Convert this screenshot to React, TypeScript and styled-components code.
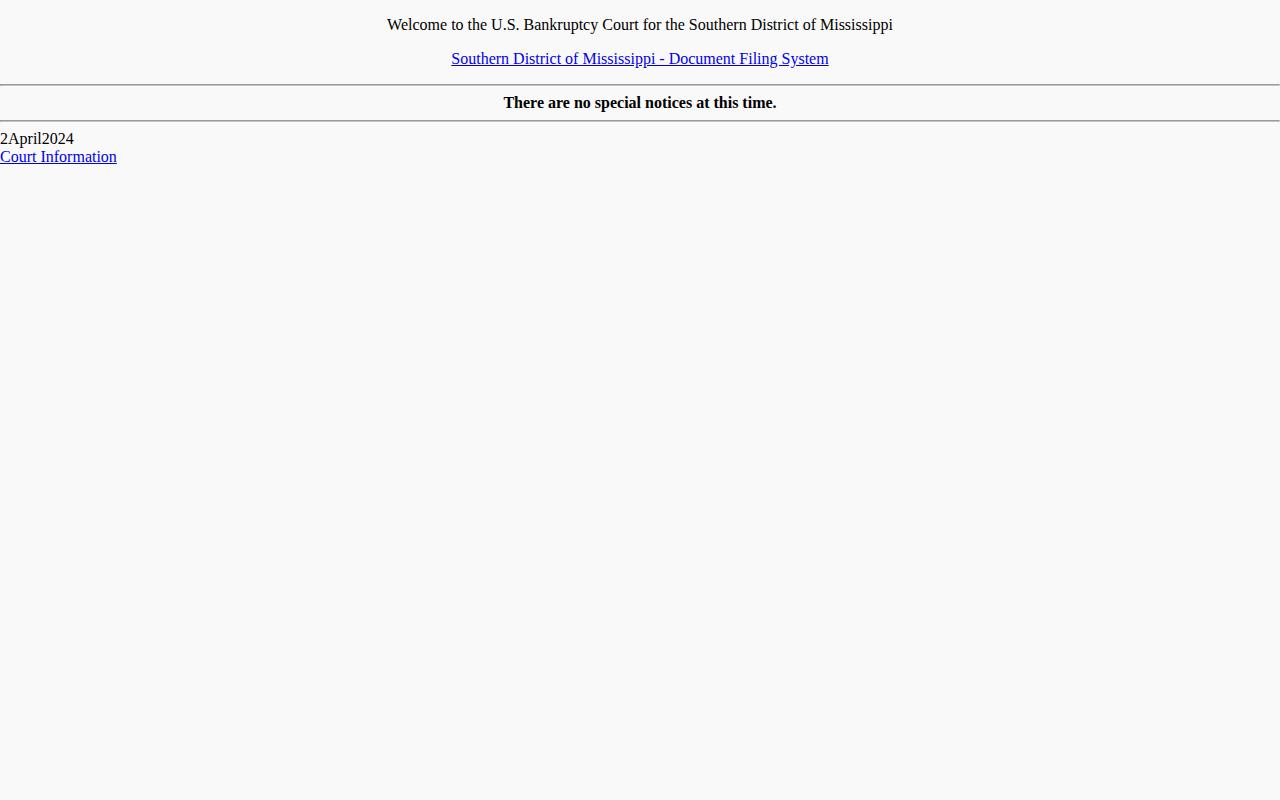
import React from "react";
import styled, { createGlobalStyle } from "styled-components";

const GlobalStyle = createGlobalStyle`
  html, body {
    margin: 0;
    padding: 0;
    background-color: #f9f9f9;
  }
  body {
    font-family: "Liberation Serif", "Times New Roman", serif;
    font-size: 16px;
    color: #000;
  }
`;

const Page = styled.div`
  width: 100%;
`;

const Welcome = styled.p`
  text-align: center;
  margin: 16px 0;
`;

const Link = styled.a`
  color: #0000ee;
  text-decoration: underline;
`;

const Rule = styled.hr`
  margin: 8px 0;
  height: 0;
  border-style: solid;
  border-width: 1px;
  border-color: #9a9a9a #dcdcdc #c4c4c4 #9a9a9a;
`;

const Notice = styled.div`
  text-align: center;
  font-weight: bold;
`;

const Footer = styled.div`
  display: flex;
  flex-direction: column;
  align-items: flex-start;
`;

const App = () => {
  return (
    <Page>
      <GlobalStyle />
      <Welcome>Welcome to the U.S. Bankruptcy Court for the Southern District of Mississippi</Welcome>
      <Welcome>
        <Link href="#">Southern District of Mississippi - Document Filing System</Link>
      </Welcome>
      <Rule />
      <Notice>There are no special notices at this time.</Notice>
      <Rule />
      <Footer>
        <span>2April2024</span>
        <Link href="#">Court Information</Link>
      </Footer>
    </Page>
  );
};

export default App;
